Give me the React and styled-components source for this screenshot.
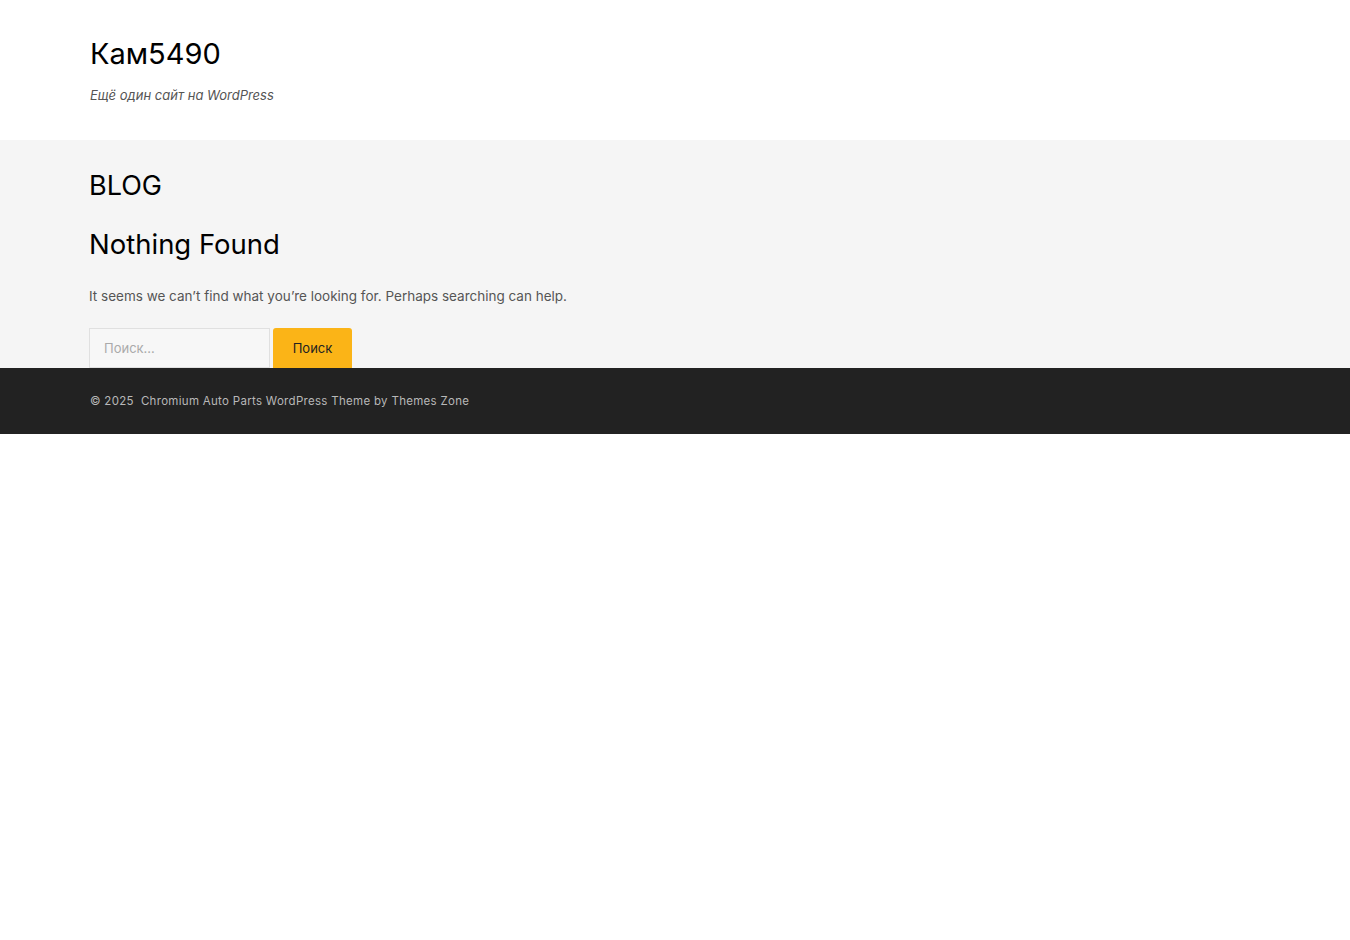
import React from "react";
import styled, { createGlobalStyle } from "styled-components";

const GlobalStyle = createGlobalStyle`
  html, body {
    margin: 0;
    padding: 0;
    background: #fff;
    font-family: Inter, "Open Sans", sans-serif;
  }
`;

const App = () => {
  return (
    <Page>
      <GlobalStyle />
      <Header>
        <Container>
          <SiteTitle>Кам5490</SiteTitle>
          <Tagline>Ещё один сайт на WordPress</Tagline>
        </Container>
      </Header>
      <Main>
        <Container>
          <PageTitle>BLOG</PageTitle>
          <SectionTitle>Nothing Found</SectionTitle>
          <Text>
            It seems we can’t find what you’re looking for. Perhaps searching
            can help.
          </Text>
          <SearchForm onSubmit={(e) => e.preventDefault()}>
            <SearchInput type="search" placeholder="Поиск…" />
            <SearchButton type="submit">Поиск</SearchButton>
          </SearchForm>
        </Container>
      </Main>
      <Footer>
        <Container>
          <Copy>© 2025 &nbsp;Chromium Auto Parts WordPress Theme by Themes Zone</Copy>
        </Container>
      </Footer>
    </Page>
  );
};

export default App;

// Styled Components
const Page = styled.div`
  width: 100%;
`;

const Container = styled.div`
  padding: 0 89px;
`;

const Header = styled.header`
  background: #fff;
  height: 140px;
  box-sizing: border-box;
  padding-top: 36px;
  padding-left: 1px;
`;

const SiteTitle = styled.h1`
  margin: 0;
  font-size: 29px;
  font-weight: 400;
  line-height: 36px;
  color: #000;
`;

const Tagline = styled.p`
  margin: 14px 0 0;
  font-size: 13px;
  font-style: italic;
  line-height: 18px;
  color: #555;
`;

const Main = styled.main`
  background: #f5f5f5;
  height: 228px;
  box-sizing: border-box;
  padding-top: 29px;
`;

const PageTitle = styled.h2`
  margin: 0;
  font-size: 27px;
  font-weight: 400;
  line-height: 34px;
  color: #000;
`;

const SectionTitle = styled.h3`
  margin: 24px 0 0;
  font-size: 27.5px;
  font-weight: 400;
  line-height: 34px;
  color: #000;
`;

const Text = styled.p`
  margin: 24px 0 0;
  font-size: 13.5px;
  line-height: 22px;
  color: #555;
`;

const SearchForm = styled.form`
  display: flex;
  gap: 3px;
  margin-top: 21px;
`;

const SearchInput = styled.input`
  width: 181px;
  height: 40px;
  box-sizing: border-box;
  border: 1px solid #e0e0e0;
  background: #f7f7f7;
  padding: 0 14px;
  font-family: inherit;
  font-size: 13px;
  color: #333;
  outline: none;
  &::placeholder {
    color: #aaa;
  }
`;

const SearchButton = styled.button`
  width: 79px;
  height: 40px;
  border: none;
  border-radius: 3px 3px 0 0;
  background: #fbb417;
  color: #222;
  font-family: inherit;
  font-size: 13px;
  cursor: pointer;
`;

const Footer = styled.footer`
  background: #222;
  height: 66px;
  display: flex;
  align-items: center;
`;

const Copy = styled.p`
  margin: 0;
  font-size: 11.5px;
  letter-spacing: 0.3px;
  color: #b8b8b8;
  padding-left: 1px;
`;
